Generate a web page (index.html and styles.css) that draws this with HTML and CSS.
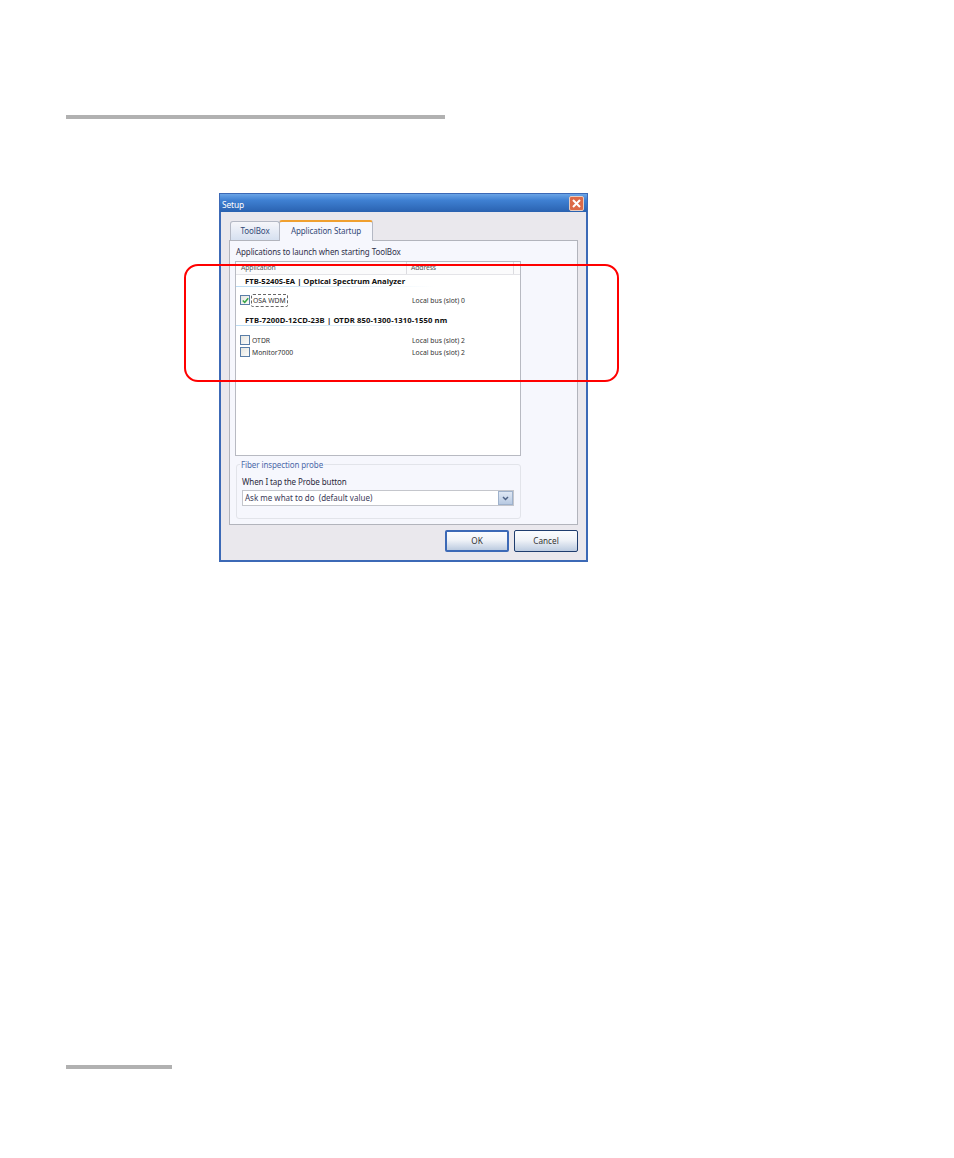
FILE: index.html
```html
<!DOCTYPE html>
<html lang="en">
<head>
    <meta charset="UTF-8">
    <meta name="viewport" content="width=device-width, initial-scale=1.0">
    <title>Setup</title>
    <link rel="stylesheet" href="styles.css">
</head>
<body>
    <div class="page">
        <div class="rule-top"></div>
        <div class="dialog">
            <div class="titlebar">
                <span class="title">Setup</span>
                <span class="close">
                    <svg width="9" height="9" viewBox="0 0 9 9"><path d="M1 1L8 8M8 1L1 8" stroke="#fff" stroke-width="2" fill="none"/></svg>
                </span>
            </div>
            <div class="dialog-body">
                <div class="tabs">
                    <div class="tab">ToolBox</div>
                    <div class="tab active">Application Startup</div>
                </div>
                <div class="panel">
                    <p class="caption">Applications to launch when starting ToolBox</p>
                    <div class="listbox">
                        <div class="list-head">
                            <span class="col-app">Application</span>
                            <span class="col-addr">Address</span>
                        </div>
                        <div class="module">FTB-5240S-EA | Optical Spectrum Analyzer</div>
                        <div class="row first">
                            <span class="check on">
                                <svg width="7" height="7" viewBox="0 0 9 9"><path d="M1 4.5L3.5 7L8 1.5" stroke="#35a545" stroke-width="2" fill="none"/></svg>
                            </span>
                            <span class="app focus">OSA WDM</span>
                            <span class="addr">Local bus (slot) 0</span>
                        </div>
                        <div class="module second">FTB-7200D-12CD-23B | OTDR 850-1300-1310-1550 nm</div>
                        <div class="row first">
                            <span class="check"></span>
                            <span class="app">OTDR</span>
                            <span class="addr">Local bus (slot) 2</span>
                        </div>
                        <div class="row">
                            <span class="check"></span>
                            <span class="app">Monitor7000</span>
                            <span class="addr">Local bus (slot) 2</span>
                        </div>
                    </div>
                    <div class="probe">
                        <span class="legend">Fiber inspection probe</span>
                        <p class="probe-label">When I tap the Probe button</p>
                        <div class="select">
                            <span class="select-text">Ask me what to do&nbsp; (default value)</span>
                            <span class="arrow">
                                <svg width="7" height="5" viewBox="0 0 7 5"><path d="M1 1L3.5 3.5L6 1" stroke="#4d6185" stroke-width="1.5" fill="none"/></svg>
                            </span>
                        </div>
                    </div>
                </div>
                <div class="buttons">
                    <button class="btn default">OK</button>
                    <button class="btn">Cancel</button>
                </div>
            </div>
        </div>
        <div class="rule-bottom"></div>
        <div class="callout"></div>
    </div>
</body>
</html>
```

FILE: styles.css
```css
body {
    margin: 0;
    background-color: #fff;
    font-family: "Noto Sans", sans-serif;
    font-size: 8px;
    letter-spacing: -0.1px;
    color: #222;
}
.page {
    position: relative;
    width: 954px;
    height: 1158px;
    padding-top: 115px;
    box-sizing: border-box;
}
.rule-top {
    width: 379px;
    height: 4px;
    margin-left: 66px;
    background-color: #b1b1b1;
}
.rule-bottom {
    width: 106px;
    height: 4px;
    margin: 503px 0 0 66px;
    background-color: #b1b1b1;
}
.callout {
    position: absolute;
    left: 184px;
    top: 264px;
    width: 431px;
    height: 114px;
    border: 2px solid #f00;
    border-radius: 14px;
}
.dialog {
    width: 369px;
    height: 369px;
    margin: 74px 0 0 219px;
    box-sizing: border-box;
    border: 2px solid #3c69b6;
    border-top-width: 1px;
    background-color: #eae8ed;
}
.titlebar {
    display: flex;
    justify-content: space-between;
    align-items: center;
    height: 18px;
    margin: 0 -1px;
    padding: 0 3px 0 2px;
    background-image: linear-gradient(#6aa4e6 0%, #3f80d2 35%, #2a62b0 100%);
}
.title {
    padding-top: 2px;
    color: #fff;
    font-size: 8.4px;
}
.close {
    display: flex;
    justify-content: center;
    align-items: center;
    width: 13px;
    height: 13px;
    border: 1px solid #e8ccc0;
    border-radius: 2px;
    background-color: #dc6a48;
}
.dialog-body {
    padding: 8px 8px 0 8px;
}
.tabs {
    display: flex;
    align-items: flex-end;
    height: 20px;
    padding-left: 1px;
}
.tab {
    width: 50px;
    height: 19px;
    box-sizing: border-box;
    border: 1px solid #b4b8c4;
    border-bottom: none;
    border-radius: 3px 3px 0 0;
    background-image: linear-gradient(#f6f6fa, #d6e0f0);
    color: #334a78;
    line-height: 18px;
    text-align: center;
}
.tab.active {
    width: 94px;
    height: 21px;
    margin-left: -1px;
    margin-bottom: -1px;
    position: relative;
    border-top: 2px solid #f0a030;
    background-image: none;
    background-color: #f6f7fd;
    line-height: 17px;
}
.panel {
    height: 285px;
    box-sizing: border-box;
    border: 1px solid #b2b4bc;
    padding: 6px 5px 0 5px;
    background-color: #f6f7fd;
}
.caption {
    margin: 0 0 5px 1px;
    height: 9px;
    line-height: 9px;
    color: #30304a;
}
.listbox {
    width: 286px;
    height: 195px;
    box-sizing: border-box;
    border: 1px solid #b8bac2;
    background-color: #fff;
}
.list-head {
    display: flex;
    height: 12px;
    border-bottom: 1px solid #e4e4e8;
    background-color: #fbfbfc;
    color: #555;
    font-size: 6.8px;
    line-height: 12px;
}
.col-app {
    width: 171px;
    box-sizing: border-box;
    padding-left: 5px;
    border-right: 1px solid #dcdce0;
}
.col-addr {
    width: 107px;
    box-sizing: border-box;
    padding-left: 4px;
    border-right: 1px solid #dcdce0;
}
.module {
    height: 12px;
    padding-left: 9px;
    background-image: linear-gradient(90deg, #bcdcf4, #fff 70%);
    background-size: 100% 1px;
    background-repeat: no-repeat;
    background-position: bottom;
    color: #111;
    font-size: 7.7px;
    font-weight: bold;
    letter-spacing: 0;
    line-height: 12px;
    white-space: nowrap;
}
.module.second {
    margin-top: 8px;
    letter-spacing: 0.12px;
}
.row {
    display: flex;
    align-items: center;
    height: 12px;
    padding-left: 4px;
    color: #333;
    font-size: 6.8px;
    letter-spacing: 0;
}
.row.first {
    margin-top: 7px;
}
.module.second + .row.first {
    margin-top: 8px;
}
.check {
    display: flex;
    justify-content: center;
    align-items: center;
    width: 8px;
    height: 8px;
    margin-right: 1px;
    border: 1px solid #5a7ea8;
    background-image: linear-gradient(135deg, #e6e6e0, #fbfbfa);
}
.app {
    width: 161px;
    box-sizing: border-box;
    padding: 0 1px;
}
.app.focus {
    padding: 1px;
    border: 1px dashed #666;
    border-radius: 2px;
    width: 37px;
    margin-right: 124px;
    white-space: nowrap;
}
.probe {
    position: relative;
    width: 285px;
    height: 55px;
    margin: 8px 0 0 1px;
    box-sizing: border-box;
    border: 1px solid #e2e4ea;
    border-radius: 3px;
    padding: 12px 6px 0 5px;
}
.legend {
    position: absolute;
    left: 3px;
    top: -6px;
    padding: 0 1px;
    background-color: #f6f7fd;
    color: #4c6aa8;
}
.probe-label {
    margin: 0 0 4px 0;
    height: 9px;
    line-height: 10px;
    color: #2a2a3c;
}
.select {
    display: flex;
    justify-content: space-between;
    align-items: center;
    height: 16px;
    box-sizing: border-box;
    border: 1px solid #c4c6cc;
    padding-left: 2px;
    background-color: #fff;
    color: #3a3a58;
}
.select-text {
    padding-bottom: 1px;
    letter-spacing: 0;
}
.arrow {
    display: flex;
    justify-content: center;
    align-items: center;
    width: 15px;
    height: 14px;
    border: 1px solid #9fb2cc;
    box-sizing: border-box;
    background-image: linear-gradient(#dfe8f4, #b8cae2);
}
.buttons {
    display: flex;
    justify-content: flex-end;
    gap: 5px;
    margin-top: 5px;
}
.btn {
    width: 64px;
    height: 22px;
    padding: 0 0 1px 0;
    border: 1px solid #1f3d6e;
    border-radius: 2px;
    background-image: linear-gradient(#fbfcfe, #f0f3f8 45%, #bccbe0);
    color: #333;
    font-family: "Noto Sans", sans-serif;
    font-size: 8.2px;
}
.btn.default {
    border: 2px solid #3c69b6;
}
```
